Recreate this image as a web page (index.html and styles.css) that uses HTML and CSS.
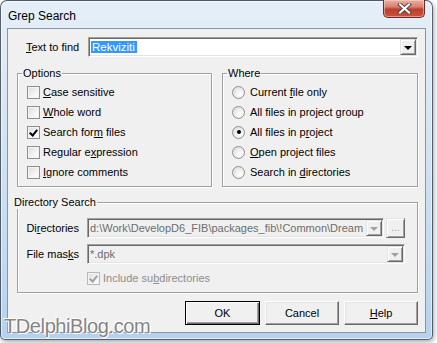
FILE: index.html
```html
<!DOCTYPE html>
<html lang="en">
<head>
  <meta charset="UTF-8" />
  <meta name="viewport" content="width=device-width, initial-scale=1.0" />
  <title>Grep Search</title>
  <link rel="stylesheet" href="styles.css">
</head>
<body>
  <div class="window">
    <div class="titlebar">
      <span class="title">Grep Search</span>
      <span class="close">
        <svg width="17" height="11" viewBox="0 0 17 11">
          <path d="M4 1.5 L13 9.5 M13 1.5 L4 9.5" stroke="#5a4a48" stroke-width="4" stroke-linecap="square" fill="none"/>
          <path d="M4 1.5 L13 9.5 M13 1.5 L4 9.5" stroke="#fff" stroke-width="2" stroke-linecap="square" fill="none"/>
        </svg>
      </span>
    </div>

    <div class="client">
      <div class="find-row">
        <label class="find-label"><u>T</u>ext to find</label>
        <div class="combo">
          <span class="combo-text"><span class="selected">Rekviziti</span></span>
          <span class="drop"><i class="arrow"></i></span>
        </div>
      </div>

      <div class="groups">
        <fieldset class="group">
          <legend>Options</legend>
          <div class="item"><span class="check"></span><span><u>C</u>ase sensitive</span></div>
          <div class="item"><span class="check"></span><span><u>W</u>hole word</span></div>
          <div class="item"><span class="check on"></span><span>Search for<u>m</u> files</span></div>
          <div class="item"><span class="check"></span><span>Regular e<u>x</u>pression</span></div>
          <div class="item"><span class="check"></span><span><u>I</u>gnore comments</span></div>
        </fieldset>
        <fieldset class="group">
          <legend>Where</legend>
          <div class="item"><span class="radio"></span><span>Current <u>f</u>ile only</span></div>
          <div class="item"><span class="radio"></span><span>All files in project <u>g</u>roup</span></div>
          <div class="item"><span class="radio on"></span><span>All files in p<u>r</u>oject</span></div>
          <div class="item"><span class="radio"></span><span><u>O</u>pen project files</span></div>
          <div class="item"><span class="radio"></span><span>Search in <u>d</u>irectories</span></div>
        </fieldset>
      </div>

      <fieldset class="group dirs">
        <legend>Directory Search</legend>
        <div class="dir-grid">
          <label>Di<u>r</u>ectories</label>
          <div class="dir-line">
            <div class="combo disabled">
              <span class="combo-text">d:\Work\DevelopD6_FIB\packages_fib\!Common\Dream</span>
              <span class="drop"><i class="arrow"></i></span>
            </div>
            <span class="browse">...</span>
          </div>
          <label>File mas<u>k</u>s</label>
          <div class="combo disabled">
            <span class="combo-text">*.dpk</span>
            <span class="drop"><i class="arrow"></i></span>
          </div>
          <span></span>
          <div class="item sub"><span class="check on disabled"></span><span>Include su<u>b</u>directories</span></div>
        </div>
      </fieldset>

      <div class="buttons">
        <span class="btn default">OK</span>
        <span class="btn">Cancel</span>
        <span class="btn"><u>H</u>elp</span>
      </div>
    </div>
  </div>

  <div class="watermark">TDelphiBlog.com</div>
</body>
</html>
```

FILE: styles.css
```css
body {
  margin: 0;
  background: #fff;
  font-family: "Liberation Sans", Arial, sans-serif;
  font-size: 11px;
  color: #000;
  width: 437px;
  height: 343px;
  overflow: hidden;
  position: relative;
}
u {
  text-decoration: underline;
  text-underline-offset: 1px;
}

/* window frame */
.window {
  width: 433px;
  box-sizing: border-box;
  border: 1px solid rgba(40, 50, 62, 0.75);
  border-radius: 7px 7px 5px 5px;
  padding: 0 6px 6px 6px;
  background: linear-gradient(180deg, #e6eff8 0%, #d6e5f3 35%, #c3daf0 75%, #b4d1ee 100%);
  box-shadow: 1px 2px 5px rgba(0, 0, 0, 0.35), inset 0 0 0 1px rgba(255, 255, 255, 0.6);
}
.titlebar {
  height: 27px;
  display: flex;
  align-items: flex-start;
}
.title {
  font-size: 12px;
  margin: 8px 0 0 1px;
  color: #000;
}
.close {
  margin: -1px 1px 0 auto;
  width: 42px;
  height: 18px;
  box-sizing: border-box;
  border: 1px solid #6d2a22;
  border-top: none;
  border-radius: 0 0 5px 5px;
  background: linear-gradient(180deg, #eab0a4 0%, #d78172 40%, #bd3e2a 55%, #c8533d 100%);
  box-shadow: inset 0 0 0 1px rgba(255, 220, 210, 0.5);
  display: flex;
  align-items: center;
  justify-content: center;
}

/* client area */
.client {
  background: #f0f0f0;
  border: 1px solid #8796a6;
  padding: 8px 7px 7px 9px;
  display: flex;
  flex-direction: column;
}
.find-row {
  display: grid;
  grid-template-columns: 71px 1fr;
  align-items: center;
}
.find-label {
  padding-left: 9px;
}

/* sunken combo */
.combo {
  height: 20px;
  box-sizing: border-box;
  background: #fff;
  border: 1px solid;
  border-color: #a0a0a0 #fff #fff #a0a0a0;
  box-shadow: inset 1px 1px #696969, inset -1px -1px #e3e3e3;
  display: flex;
  align-items: center;
  padding: 1px;
}
.combo-text {
  flex: 1;
  padding-left: 1px;
  white-space: nowrap;
  overflow: hidden;
}
.selected {
  background: #3399ff;
  color: #fff;
  padding: 1px 2px 1px 1px;
  font-size: 11.5px;
}
.drop {
  width: 16px;
  height: 16px;
  box-sizing: border-box;
  background: #f0f0f0;
  border: 1px solid;
  border-color: #e3e3e3 #696969 #696969 #e3e3e3;
  box-shadow: inset 1px 1px #fff, inset -1px -1px #a0a0a0;
  display: flex;
  align-items: center;
  justify-content: center;
}
.arrow {
  width: 0;
  height: 0;
  border-left: 4px solid transparent;
  border-right: 4px solid transparent;
  border-top: 4px solid #000;
  margin-top: 1px;
}
.combo.disabled {
  background: #f0f0f0;
  color: #6d6d6d;
}
.combo.disabled .arrow {
  border-top-color: #a0a0a0;
}

/* group boxes */
.groups {
  display: grid;
  grid-template-columns: 195px 196px;
  column-gap: 10px;
  margin-top: 10px;
}
.group {
  margin: 0;
  border: 1px solid #a0a0a0;
  box-shadow: inset 1px 1px #fff, 1px 1px #fff;
  padding: 2px 4px 4px 9px;
  min-width: 0;
}
.group legend {
  padding: 0 1px;
  margin-left: -5px;
  line-height: 13px;
}
.item {
  height: 20px;
  display: flex;
  align-items: center;
  gap: 3px;
  white-space: nowrap;
}

.check {
  width: 13px;
  height: 13px;
  box-sizing: border-box;
  border: 1px solid #8f8f8f;
  background: linear-gradient(135deg, #dcdcdc 0%, #f4f4f4 60%, #fff 100%);
  box-shadow: inset 0 0 0 1px #f3f3f3;
  position: relative;
  flex: none;
}
.check.on::after {
  content: "";
  position: absolute;
  left: 3px;
  top: 1px;
  width: 3px;
  height: 6px;
  border: solid #000;
  border-width: 0 2px 2px 0;
  transform: rotate(40deg);
}
.check.disabled {
  border-color: #b8b8b8;
}
.check.on.disabled::after {
  border-color: #a0a0a0;
}

.radio {
  width: 13px;
  height: 13px;
  box-sizing: border-box;
  border: 1px solid #8f8f8f;
  border-radius: 50%;
  background: radial-gradient(circle at 65% 65%, #fff 0%, #f0f0f0 40%, #d4d4d4 100%);
  margin-right: 2px;
  display: flex;
  align-items: center;
  justify-content: center;
  flex: none;
}
.radio.on::after {
  content: "";
  width: 4px;
  height: 4px;
  border-radius: 50%;
  background: #000;
}

/* directory search */
.dirs {
  margin-top: 9px;
  padding: 9px 12px 6px 0;
}
.dir-grid {
  display: grid;
  grid-template-columns: 62px 1fr;
  column-gap: 7px;
  row-gap: 6px;
  align-items: center;
}
.dir-grid label {
  text-align: right;
  padding-right: 1px;
}
.dir-line {
  display: flex;
  gap: 2px;
}
.dir-line .combo {
  flex: 1;
  min-width: 0;
}
.browse {
  width: 19px;
  height: 20px;
  box-sizing: border-box;
  border: 1px solid;
  border-color: #e3e3e3 #696969 #696969 #e3e3e3;
  box-shadow: inset 1px 1px #fff, inset -1px -1px #a0a0a0;
  color: #a0a0a0;
  text-align: center;
  line-height: 16px;
  flex: none;
}
.sub {
  height: 16px;
  color: #8d8d8d;
}

/* buttons */
.buttons {
  display: flex;
  justify-content: flex-end;
  gap: 5px;
  margin-top: 8px;
}
.btn {
  width: 74px;
  height: 24px;
  box-sizing: border-box;
  border: 1px solid;
  border-color: #fff #696969 #696969 #fff;
  box-shadow: inset -1px -1px #a0a0a0, inset 1px 1px #e3e3e3;
  display: flex;
  align-items: center;
  justify-content: center;
}
.btn.default {
  width: 75px;
  border-color: #000;
  box-shadow: inset 1px 1px #fff, inset -1px -1px #696969, inset -2px -2px #a0a0a0;
}

/* overlay watermark */
.watermark {
  position: absolute;
  left: 4px;
  top: 315px;
  font-size: 20px;
  letter-spacing: -0.4px;
  color: #858585;
  text-shadow: 0 0 2px #fff, 1px 1px 0 #fff, -1px -1px 0 #fff;
}
```
